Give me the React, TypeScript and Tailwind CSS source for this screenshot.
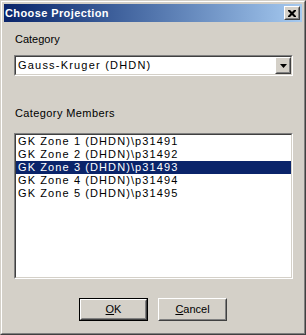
import React from "react";

const FONT = { fontFamily: '"Liberation Sans", Arial, sans-serif' };

const members = [
    "GK Zone 1 (DHDN)\\p31491",
    "GK Zone 2 (DHDN)\\p31492",
    "GK Zone 3 (DHDN)\\p31493",
    "GK Zone 4 (DHDN)\\p31494",
    "GK Zone 5 (DHDN)\\p31495",
];

// classic raised 3D box
function Raised({ className = "", children }: { className?: string; children?: React.ReactNode }) {
    return (
        <div className={`border border-t-white border-l-white border-r-[#404040] border-b-[#404040] ${className}`}>
            <div className="w-full h-full border border-t-[#d4d0c8] border-l-[#d4d0c8] border-r-[#808080] border-b-[#808080] bg-[#d4d0c8]">
                {children}
            </div>
        </div>
    );
}

// sunken field (combo / list)
function Sunken({ className = "", children }: { className?: string; children?: React.ReactNode }) {
    return (
        <div className={`border border-t-[#808080] border-l-[#808080] border-r-white border-b-white ${className}`}>
            <div className="w-full h-full border border-t-[#404040] border-l-[#404040] border-r-[#d4d0c8] border-b-[#d4d0c8] bg-white">
                {children}
            </div>
        </div>
    );
}

export default function App() {
    return (
        <div className="w-[306px] h-[335px] text-[11px] leading-[13px] text-black select-none" style={FONT}>
            <div className="w-full h-full border border-t-[#d4d0c8] border-l-[#d4d0c8] border-r-[#404040] border-b-[#404040]">
                <div className="w-full h-full flex flex-col border border-t-white border-l-white border-r-[#808080] border-b-[#808080] bg-[#d4d0c8] p-[2px]">
                    {/* Title bar */}
                    <div className="h-[18px] flex items-center justify-between bg-gradient-to-r from-[#0a246a] to-[#a6caf0] pl-[1px] pr-[2px]">
                        <span className="text-white font-bold text-[11px] tracking-[0.4px]">Choose Projection</span>
                        <Raised className="w-[16px] h-[14px]">
                            <div className="w-full h-full flex items-center justify-center">
                                <svg width="8" height="7" viewBox="0 0 8 7">
                                    <path d="M0 0h2l2 2l2-2h2v1l-2.5 2.5L8 6v1H6L4 5L2 7H0V6l2.5-2.5L0 1z" fill="#000" />
                                </svg>
                            </div>
                        </Raised>
                    </div>

                    {/* Body */}
                    <div className="flex flex-col pl-[10px] pr-[9px] pt-[11px]">
                        <div className="pl-[1px]">Category</div>

                        <Sunken className="mt-[9px] h-[21px]">
                            <div className="flex h-full items-center">
                                <span className="flex-1 pl-[2px] tracking-[1.2px]">Gauss-Kruger (DHDN)</span>
                                <Raised className="w-[16px] h-[17px]">
                                    <div className="w-full h-full flex items-center justify-center">
                                        <svg width="7" height="4" viewBox="0 0 7 4">
                                            <path d="M0 0h7L3.5 4z" fill="#000" />
                                        </svg>
                                    </div>
                                </Raised>
                            </div>
                        </Sunken>

                        <div className="mt-[31px] pl-[1px] tracking-[0.4px]">Category Members</div>

                        <Sunken className="mt-[13px] h-[146px]">
                            <div className="flex flex-col">
                                {members.map((m, i) => (
                                    <div
                                        key={i}
                                        className={`h-[13px] pl-[2px] whitespace-nowrap tracking-[1.1px] ${i === 2 ? "bg-[#0a246a] text-white" : ""}`}
                                    >
                                        {m}
                                    </div>
                                ))}
                            </div>
                        </Sunken>

                        {/* Buttons */}
                        <div className="mt-[19px] flex justify-center gap-[10px] pr-[1px]">
                            <div className="w-[69px] h-[23px] border border-black">
                                <Raised className="w-full h-full">
                                    <div className="w-full h-full flex items-center justify-center">
                                        <span><span className="underline">O</span>K</span>
                                    </div>
                                </Raised>
                            </div>
                            <Raised className="w-[69px] h-[23px]">
                                <div className="w-full h-full flex items-center justify-center">
                                    <span><span className="underline">C</span>ancel</span>
                                </div>
                            </Raised>
                        </div>
                    </div>
                </div>
            </div>
        </div>
    );
}
